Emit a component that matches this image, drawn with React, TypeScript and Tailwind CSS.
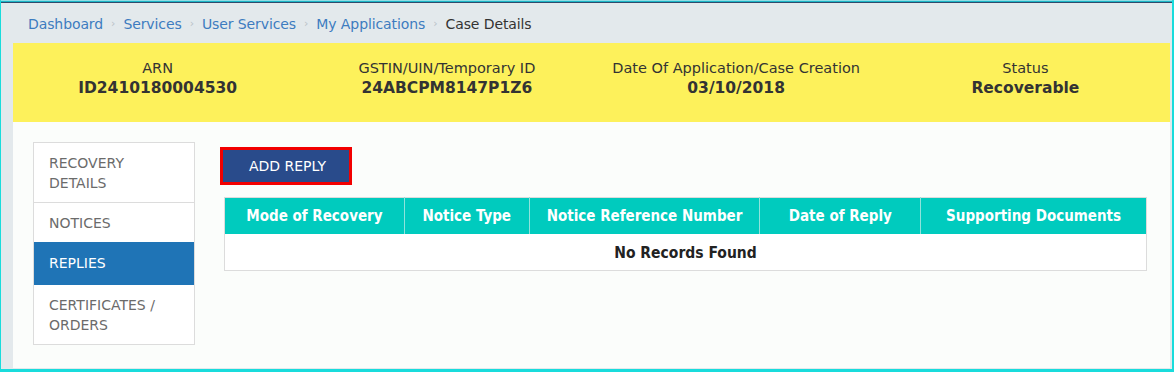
import { Fragment } from 'react';

const crumbs = ['Dashboard', 'Services', 'User Services', 'My Applications'];

const facts = [
  { label: 'ARN', value: 'ID2410180004530' },
  { label: 'GSTIN/UIN/Temporary ID', value: '24ABCPM8147P1Z6' },
  { label: 'Date Of Application/Case Creation', value: '03/10/2018' },
  { label: 'Status', value: 'Recoverable' },
];

const columns = [
  { title: 'Mode of Recovery', w: 'w-[180px]' },
  { title: 'Notice Type', w: 'w-[125px]' },
  { title: 'Notice Reference Number', w: 'w-[231px]' },
  { title: 'Date of Reply', w: 'w-[161px]' },
  { title: 'Supporting Documents', w: 'w-[226px]' },
];

const tabs = [
  { label: ['RECOVERY', 'DETAILS'], active: false },
  { label: ['NOTICES'], active: false },
  { label: ['REPLIES'], active: true },
  { label: ['CERTIFICATES /', 'ORDERS'], active: false },
];

export default function App() {
  return (
    <div className="w-[1174px] h-[372px] font-['DejaVu_Sans',sans-serif] flex flex-col border-l border-r-2 border-b-[3px] border-[#19dcdc] bg-[#e3e9ec]">
      {/* top edge */}
      <div className="h-px bg-[#8fdde4]" />
      <div className="h-px bg-[#1bb6c6]" />
      <div className="h-px bg-[#2e4c6c]" />

      <div className="flex-1 flex flex-col pl-[12px] pr-[2px] pb-px">
        {/* Breadcrumb */}
        <nav className="h-[40px] flex items-center pl-[15px] pt-[2px] text-[14px] tracking-[-0.1px]">
          {crumbs.map((c) => (
            <Fragment key={c}>
              <span className="text-[#3d7cc0]">{c}</span>
              <span className="text-[#b9c2c8] text-[11px] mx-[8px]">›</span>
            </Fragment>
          ))}
          <span className="text-[#333]">Case Details</span>
        </nav>

        {/* Case summary */}
        <div className="h-[79px] bg-[#fdf15b] grid grid-cols-4 pt-[15px]">
          {facts.map((f) => (
            <div key={f.label} className="text-center leading-[20px] text-[#333]">
              <div className="text-[14.5px]">{f.label}</div>
              <div className="text-[15.5px] font-bold">{f.value}</div>
            </div>
          ))}
        </div>

        {/* Body */}
        <div className="flex-1 bg-[#fbfdfb] flex pt-[20px] pl-[20px]">
          <aside className="w-[162px] self-start border border-[#dcdcdc] bg-white text-[14px] text-[#6b6b6b]">
            {tabs.map((t, i) => (
              <div
                key={i}
                className={
                  t.active
                    ? 'h-[43px] flex flex-col justify-center pl-[15px] bg-[#1f74b6] text-white'
                    : `flex flex-col justify-center pl-[15px] leading-[20px] ${
                        t.label.length > 1 ? 'h-[59px]' : 'h-[40px]'
                      } ${i > 0 && !tabs[i - 1].active ? 'border-t border-[#dcdcdc]' : ''}`
                }
              >
                {t.label.map((l) => (
                  <span key={l}>{l}</span>
                ))}
              </div>
            ))}
          </aside>

          <div className="ml-[29px] w-[923px] flex flex-col">
            <button className="self-start -ml-[4px] mt-[5px] border-[3px] border-[#f20000] bg-[#294b8b] w-[132px] h-[38px] pl-[3px] text-white text-[14px]">
              ADD REPLY
            </button>

            <table className="mt-[12px] border-collapse border border-[#dcdcdc] bg-white">
              <thead>
                <tr className="h-[36px] bg-[#00cbbe] text-white text-[15px] font-bold [font-stretch:condensed]">
                  {columns.map((c, i) => (
                    <th
                      key={c.title}
                      className={`${c.w} font-bold ${i > 0 ? 'border-l border-[#8fe3dc]' : ''}`}
                    >
                      {c.title}
                    </th>
                  ))}
                </tr>
              </thead>
              <tbody>
                <tr className="h-[37px]">
                  <td
                    colSpan={5}
                    className="text-center pt-[3px] text-[15.5px] font-bold text-[#222] [font-stretch:condensed]"
                  >
                    No Records Found
                  </td>
                </tr>
              </tbody>
            </table>
          </div>
        </div>
      </div>
    </div>
  );
}
